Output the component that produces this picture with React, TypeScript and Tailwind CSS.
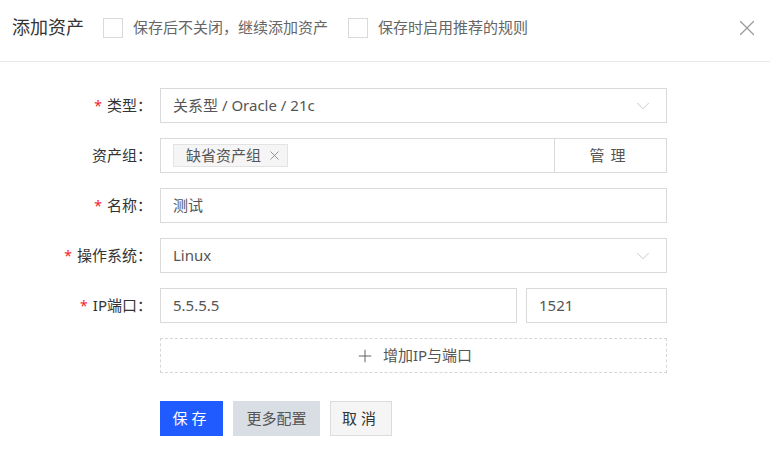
import { ChevronDown, Plus, X } from "lucide-react";

const font = { fontFamily: '"Noto Sans", "Noto Sans CJK SC", sans-serif' };

function Label({ text, required }: { text: string; required?: boolean }) {
  return (
    <div className="flex w-[160px] shrink-0 items-center justify-end pr-[8px] text-[15px] text-[#333]">
      {required && <span className="mr-[5px] text-[14px] text-[#f5222d]">*</span>}
      {text}：
    </div>
  );
}

function Box({ children, className = "" }: { children?: React.ReactNode; className?: string }) {
  return (
    <div className={`flex h-[35px] items-center border border-[#d9d9d9] bg-white px-[12px] text-[15px] text-[#555] ${className}`}>
      {children}
    </div>
  );
}

export default function App() {
  return (
    <div className="h-[472px] w-[770px] bg-white" style={font}>
      <div className="flex h-[62px] items-center border-b border-[#e8e8e8] pb-[6px] pl-[12px] pr-[10px]">
        <div className="text-[18px] text-[#333]">添加资产</div>
        <div className="ml-[19px] h-[20px] w-[20px] border border-[#d9d9d9]" />
        <div className="ml-[10px] text-[15px] text-[#666]">保存后不关闭，继续添加资产</div>
        <div className="ml-[20px] h-[20px] w-[20px] border border-[#d9d9d9]" />
        <div className="ml-[10px] text-[15px] text-[#666]">保存时启用推荐的规则</div>
        <X className="ml-auto h-[26px] w-[26px] text-[#999]" strokeWidth={1.1} />
      </div>

      <div className="flex flex-col gap-[15px] pt-[26px]">
        <div className="flex">
          <Label text="类型" required />
          <Box className="w-[507px] justify-between">
            <span>关系型 / Oracle / 21c</span>
            <ChevronDown className="h-[22px] w-[22px] text-[#c4c4c4]" strokeWidth={1} />
          </Box>
        </div>

        <div className="flex">
          <Label text="资产组" />
          <div className="flex w-[507px]">
            <Box className="flex-1 px-[6px]">
              <span className="flex h-[23px] items-center gap-[6px] border border-[#e3e3e3] bg-[#f5f5f5] pl-[12px] pr-[5px] text-[#555]">
                缺省资产组
                <X className="h-[15px] w-[15px] text-[#888]" strokeWidth={1.4} />
              </span>
            </Box>
            <Box className="-ml-px w-[113px] justify-center tracking-[6px] text-[#333]">管理</Box>
          </div>
        </div>

        <div className="flex">
          <Label text="名称" required />
          <Box className="w-[507px]">测试</Box>
        </div>

        <div className="flex">
          <Label text="操作系统" required />
          <Box className="w-[507px] justify-between">
            <span>Linux</span>
            <ChevronDown className="h-[22px] w-[22px] text-[#c4c4c4]" strokeWidth={1} />
          </Box>
        </div>

        <div className="flex">
          <Label text="IP端口" required />
          <Box className="w-[357px]">5.5.5.5</Box>
          <Box className="ml-[9px] w-[141px]">1521</Box>
        </div>

        <div className="flex">
          <div className="w-[160px] shrink-0" />
          <div className="flex h-[35px] w-[507px] items-center justify-center gap-[8px] border border-dashed border-[#d6d6d6] text-[15px] text-[#555]">
            <Plus className="h-[20px] w-[20px] text-[#555]" strokeWidth={1.1} />
            增加IP与端口
          </div>
        </div>

        <div className="flex pt-[13px]">
          <div className="w-[160px] shrink-0" />
          <button className="h-[35px] w-[63px] bg-[#1f5bff] text-[15px] tracking-[4px] text-white">保存</button>
          <button className="ml-[10px] h-[35px] w-[87px] bg-[#d9dde4] text-[15px] text-[#555]">更多配置</button>
          <button className="ml-[10px] h-[35px] w-[62px] border border-[#dcdcdc] bg-[#f5f5f5] text-[15px] tracking-[4px] text-[#333]">取消</button>
        </div>
      </div>
    </div>
  );
}
